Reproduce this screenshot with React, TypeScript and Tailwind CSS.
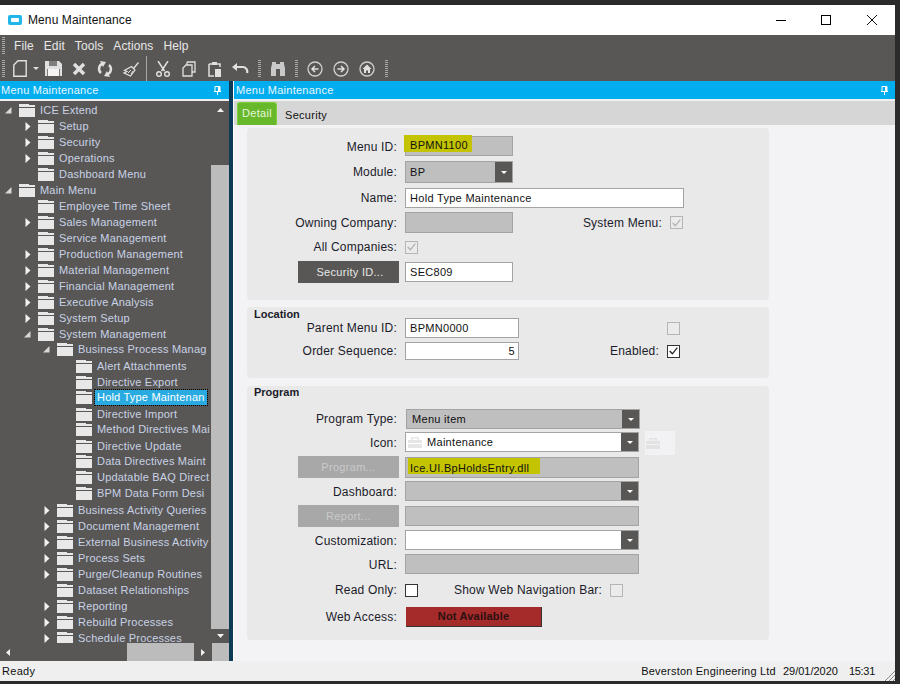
import type { ReactNode } from "react";

const grip = (
  <div className="w-[3px] h-[17px] shrink-0 bg-[repeating-linear-gradient(to_bottom,#a9a9a9_0,#a9a9a9_1px,transparent_1px,transparent_2px)]" />
);

function Folder() {
  return (
    <svg width="16" height="13" viewBox="0 0 16 13" className="shrink-0">
      <path d="M0 0h10v1h6v2H0z" fill="#e8e8e8" />
      <path d="M0 4h16v9H0z" fill="#e8e8e8" />
    </svg>
  );
}

function Arrow({ state }: { state?: "open" | "closed" }) {
  return (
    <span className="w-[7px] shrink-0 flex justify-end">
      {state === "open" && (
        <svg width="7" height="7" viewBox="0 0 7 7">
          <path d="M0 6.500 6.500 0v6.500z" fill="#d8d8d8" />
        </svg>
      )}
      {state === "closed" && (
        <svg width="6" height="9" viewBox="0 0 6 9">
          <path d="M.5 0 5.500 4.500.5 9z" fill="#f0f0f0" />
        </svg>
      )}
    </span>
  );
}

type TreeRow = {
  label: string;
  depth: number;
  state?: "open" | "closed";
  selected?: boolean;
  nudge?: string;
};

// the tree in the picture is not on an even 16px step in this stretch
const treeRows: TreeRow[] = [
  { label: "ICE Extend", depth: 0, state: "open" },
  { label: "Setup", depth: 1, state: "closed" },
  { label: "Security", depth: 1, state: "closed" },
  { label: "Operations", depth: 1, state: "closed" },
  { label: "Dashboard Menu", depth: 1 },
  { label: "Main Menu", depth: 0, state: "open" },
  { label: "Employee Time Sheet", depth: 1 },
  { label: "Sales Management", depth: 1, state: "closed" },
  { label: "Service Management", depth: 1 },
  { label: "Production Management", depth: 1, state: "closed" },
  { label: "Material Management", depth: 1, state: "closed" },
  { label: "Financial Management", depth: 1, state: "closed" },
  { label: "Executive Analysis", depth: 1, state: "closed" },
  { label: "System Setup", depth: 1, state: "closed" },
  { label: "System Management", depth: 1, state: "open" },
  { label: "Business Process Manag", depth: 2, state: "open", nudge: "mt-[-1px]" },
  { label: "Alert Attachments", depth: 3, nudge: "mt-px" },
  { label: "Directive Export", depth: 3 },
  { label: "Hold Type Maintenan", depth: 3, selected: true, nudge: "mt-[-1px]" },
  { label: "Directive Import", depth: 3, nudge: "mt-px" },
  { label: "Method Directives Mai", depth: 3, nudge: "mt-[-1px]" },
  { label: "Directive Update", depth: 3, nudge: "mt-px" },
  { label: "Data Directives Maint", depth: 3, nudge: "mt-[-1px]" },
  { label: "Updatable BAQ Direct", depth: 3 },
  { label: "BPM Data Form Desi", depth: 3 },
  { label: "Business Activity Queries", depth: 2, state: "closed", nudge: "mt-px" },
  { label: "Document Management", depth: 2, state: "closed" },
  { label: "External Business Activity", depth: 2, state: "closed" },
  { label: "Process Sets", depth: 2, state: "closed" },
  { label: "Purge/Cleanup Routines", depth: 2, state: "closed" },
  { label: "Dataset Relationships", depth: 2 },
  { label: "Reporting", depth: 2, state: "closed" },
  { label: "Rebuild Processes", depth: 2, state: "closed" },
  { label: "Schedule Processes", depth: 2, state: "closed" },
];

const depthPad = ["pl-[5px]", "pl-[24px]", "pl-[43px]", "pl-[62px]"];

function Toolbar() {
  const c = "#e0e0e0";
  return (
    <div className="h-[25px] flex items-center pl-[2px]">
      {grip}
      <svg width="14" height="17" viewBox="0 0 14 17" className="ml-[8px]">
        <path d="M5 .8h8.200v15.400H.8V5z" fill="none" stroke={c} strokeWidth="1.400" />
      </svg>
      <svg width="6" height="4" viewBox="0 0 6 4" className="ml-[6px]">
        <path d="M0 0h6L3 3z" fill={c} />
      </svg>
      <svg width="17" height="15" viewBox="0 0 17 15" className="ml-[6px]">
        <path d="M0 0h14l3 3v12H0z" fill={c} />
        <path d="M4 0h8v5H4z" fill="#807e7c" />
        <path d="M3 8h11v7H3z" fill="#f4f4f4" />
        <path d="M2 8h1v7H2zM14 8h1v7h-1z" fill="#807e7c" />
      </svg>
      <svg width="14" height="14" viewBox="0 0 14 14" className="ml-[10px]">
        <path d="M2 2l10 10M12 2 2 12" stroke={c} strokeWidth="3.400" />
      </svg>
      <svg width="16" height="16" viewBox="0 0 16 16" className="ml-[11px]">
        <path d="M6 2.500A5.500 5.500 0 0 0 4 12M10 13.500A5.500 5.500 0 0 0 12 4" fill="none" stroke={c} strokeWidth="2.400" />
        <path d="M3 0 9 1 6 6zM13 16 7 15l3-5z" fill={c} />
      </svg>
      <svg width="17" height="16" viewBox="0 0 17 16" className="ml-[10px]">
        <path d="M10 7 15 1l1 1-5 6" fill={c} />
        <path d="M8.500 5.500 12 9l-4.500 6L1 12l3-1.500-2.500-1z" fill="none" stroke={c} strokeWidth="1.200" />
        <path d="M5 12l3-3M8 13l2-3" stroke={c} strokeWidth="1" />
      </svg>
      <div className="w-px h-[25px] bg-[#a8a8a8] ml-[6px]" />
      <svg width="16" height="16" viewBox="0 0 16 16" className="ml-[8px]">
        <path d="M3 0l6.500 10M13 0 6.500 10" stroke={c} strokeWidth="1.500" />
        <circle cx="4" cy="13" r="2.300" fill="none" stroke={c} strokeWidth="1.400" />
        <circle cx="12" cy="13" r="2.300" fill="none" stroke={c} strokeWidth="1.400" />
      </svg>
      <svg width="14" height="16" viewBox="0 0 14 16" className="ml-[11px]">
        <path d="M5 1h8v10h-3M5 1v3" fill="none" stroke={c} strokeWidth="1.300" />
        <path d="M4 4h6v11H1V7z" fill="none" stroke={c} strokeWidth="1.300" />
      </svg>
      <svg width="14" height="16" viewBox="0 0 14 16" className="ml-[12px]">
        <path d="M1 3h11v3M1 3v12h5" fill="none" stroke={c} strokeWidth="1.500" />
        <path d="M4 1h5v3H4z" fill={c} />
        <path d="M7 8h6v8H7z" fill={c} />
      </svg>
      <svg width="17" height="11" viewBox="0 0 17 11" className="ml-[10px]">
        <path d="M4 4h6.500a4.500 4.500 0 0 1 4.500 6" fill="none" stroke={c} strokeWidth="2.200" />
        <path d="M0 4l5-4v8z" fill={c} />
      </svg>
      <div className="ml-[9px]">{grip}</div>
      <svg width="16" height="14" viewBox="0 0 16 14" className="ml-[9px]">
        <path d="M1 6 2 2V0h4v2h4V0h4v2l1 4v8h-5V7H6v7H1z" fill="#c9c9c9" />
      </svg>
      <div className="ml-[9px]">{grip}</div>
      {["M11.500 8H5M8 5 5 8l3 3", "M4.500 8H11M8 5l3 3-3 3", ""].map((d, i) => (
        <svg key={i} width="16" height="16" viewBox="0 0 16 16" className={i === 0 ? "ml-[9px]" : "ml-[10px]"}>
          <circle cx="8" cy="8" r="7" fill="none" stroke="#d0d0d0" strokeWidth="1.300" />
          {d ? (
            <path d={d} fill="none" stroke={c} strokeWidth="1.500" />
          ) : (
            <path d="M8 3.500 12.500 8H11v4H9V9.500H7V12H5V8H3.500z" fill={c} />
          )}
        </svg>
      ))}
      <div className="ml-[10px]">{grip}</div>
    </div>
  );
}

function Pin() {
  return (
    <svg width="7" height="9" viewBox="0 0 7 9">
      <path d="M1 .5h5v5H1zM0 5.500h7M3.500 5.500V9" fill="none" stroke="#fff" />
      <path d="M4 1h2v4H4z" fill="#fff" />
    </svg>
  );
}

function DropBtn() {
  return (
    <span className="ml-auto w-[17px] h-full bg-[#595755] flex items-center justify-center shrink-0">
      <svg width="6" height="3" viewBox="0 0 6 3">
        <path d="M0 0h6L3 3z" fill="#fff" />
      </svg>
    </span>
  );
}

function Field({
  w,
  white,
  drop,
  right,
  children,
  h = "h-[20px]",
}: {
  w: string;
  white?: boolean;
  drop?: boolean;
  right?: boolean;
  children?: ReactNode;
  h?: string;
}) {
  return (
    <div
      className={`${w} ${h} border border-[#a3a3a3] shrink-0 flex items-center text-[11px] tracking-[0.3px] text-[#111] ${
        white ? "bg-white" : "bg-[#bfbfbf]"
      } ${right ? "justify-end pr-[3px]" : ""}`}
    >
      {children}
      {drop && <DropBtn />}
    </div>
  );
}

function Label({ children, w = "w-[158px]", low }: { children: ReactNode; w?: string; low?: boolean }) {
  return (
    <span className={`${w} ${low ? "pt-px" : ""} shrink-0 text-right text-[12px] tracking-[0.2px] text-[#1b1b2a] pr-[8px]`}>
      {children}
    </span>
  );
}

function Check({ checked, disabled }: { checked?: boolean; disabled?: boolean }) {
  return (
    <span
      className={`w-[13px] h-[13px] shrink-0 border flex items-center justify-center ${
        disabled ? "border-[#b5b5b5] bg-[#ebebeb]" : "border-[#333] bg-white"
      }`}
    >
      {checked && (
        <svg width="9" height="8" viewBox="0 0 9 8">
          <path d="M.7 4 3.400 6.800 8.300.7" fill="none" stroke={disabled ? "#b0b0b0" : "#222"} strokeWidth="1.300" />
        </svg>
      )}
    </span>
  );
}

function Btn({ children, dark }: { children: ReactNode; dark?: boolean }) {
  return (
    <div className="pl-[51px] pr-[6px] shrink-0">
      <div
        className={`w-[101px] h-[22px] flex items-center justify-center text-[11px] tracking-[0.3px] ${
          dark ? "bg-[#595755] text-[#e8e8e8] pl-[3px]" : "bg-[#a8a8a8] text-[#c9c9c9]"
        }`}
      >
        {children}
      </div>
    </div>
  );
}

function Toolbox({ color }: { color: string }) {
  return (
    <svg width="14" height="11" viewBox="0 0 14 11" className="shrink-0">
      <path d="M3 3V0h8v3h3v3H0V3zM4.500 3h5V1.500h-5z" fill={color} fillRule="evenodd" />
      <path d="M0 7h14v4H0z" fill={color} />
    </svg>
  );
}

export default function App() {
  return (
    <div className="w-[900px] h-[684px] bg-[#2b2b2b] pt-[5px] pr-[5px] pb-[3px] overflow-hidden font-['Liberation_Sans',Arial,sans-serif] flex flex-col">
      {/* Title bar */}
      <div className="h-[30px] bg-white flex items-center shrink-0">
        <span className="ml-[8px] w-[14px] h-[10px] rounded-[2px] bg-[#22b5e8] flex items-center justify-center">
          <span className="w-[8px] h-[4px] bg-white rounded-[1px]" />
        </span>
        <span className="ml-[6px] text-[12px] tracking-[0.1px] text-[#111]">Menu Maintenance</span>
        <div className="ml-auto flex items-center">
          <span className="w-[10px] h-px bg-black mr-[35px]" />
          <span className="w-[10px] h-[10px] border border-black mr-[36px]" />
          <svg width="10" height="10" viewBox="0 0 10 10" className="mr-[18px]">
            <path d="M0 0l10 10M10 0 0 10" stroke="#111" strokeWidth="1" />
          </svg>
        </div>
      </div>

      {/* Menu and tool bars */}
      <div className="bg-[#595755] shrink-0 h-[46px]">
        <div className="h-[21px] flex items-center pl-[2px]">
          {grip}
          <div className="ml-[9px] flex gap-[10px] text-[12px] tracking-[0.1px] text-[#e8e8e8]">
            {["File", "Edit", "Tools", "Actions", "Help"].map((m) => (
              <span key={m}>{m}</span>
            ))}
          </div>
        </div>
        <Toolbar />
      </div>

      <div className="flex-1 flex min-h-0">
        {/* Tree panel */}
        <div className="w-[229px] shrink-0 flex flex-col bg-[#595755]">
          <div className="h-[18px] bg-[#00aeef] flex items-center justify-between pl-px pr-[8px] text-[11px] tracking-[0.25px] text-[#e9f6ff] shrink-0">
            Menu Maintenance
            <Pin />
          </div>
          <div className="h-[2px] bg-[#f0f0f0] shrink-0" />
          <div className="flex-1 min-h-0 flex flex-col">
            <div className="flex-1 min-h-0 flex">
              <div className="flex-1 min-w-0 pt-px overflow-hidden">
                {treeRows.map((r) => (
                  <div key={r.label} className={`h-[16px] flex items-center ${depthPad[r.depth]} ${r.nudge ?? ""}`}>
                    <Arrow state={r.state} />
                    <span className="ml-[7px]">
                      <Folder />
                    </span>
                    <span
                      className={`ml-[3px] px-[2px] h-[15px] leading-[15px] text-[11px] tracking-[0.2px] whitespace-nowrap ${
                        r.selected ? "bg-[#29abe2] text-white outline-1 outline-dotted outline-black" : "text-[#c8d2e6]"
                      }`}
                    >
                      {r.label}
                    </span>
                  </div>
                ))}
              </div>
              <div className="w-[18px] shrink-0 flex flex-col items-center">
                <svg width="7" height="4" viewBox="0 0 7 4" className="mt-[7px]">
                  <path d="M0 4h7L3.500 0z" fill="#f0f0f0" />
                </svg>
                <div className="mt-[53px] flex-1 w-full bg-[#bcbcbc]" />
                <svg width="7" height="4" viewBox="0 0 7 4" className="my-[5px]">
                  <path d="M0 0h7L3.500 4z" fill="#f0f0f0" />
                </svg>
              </div>
            </div>
            <div className="h-[18px] flex items-center shrink-0">
              <svg width="4" height="7" viewBox="0 0 4 7" className="ml-[6px]">
                <path d="M4 0v7L0 3.500z" fill="#f0f0f0" />
              </svg>
              <div className="ml-[117px] w-[67px] h-full bg-[#bcbcbc]" />
              <svg width="4" height="7" viewBox="0 0 4 7" className="ml-[7px]">
                <path d="M0 0v7l4-3.500z" fill="#f0f0f0" />
              </svg>
              <div className="ml-[7px] w-[17px] h-full bg-[#bcbcbc]" />
            </div>
          </div>
        </div>

        <div className="w-[4px] shrink-0 bg-[#0c3a57]" />
        <div className="w-px shrink-0 bg-white" />

        {/* Detail panel */}
        <div className="flex-1 min-w-0 flex flex-col bg-[#f3f3f5]">
          <div className="h-[18px] bg-[#00aeef] flex items-center justify-between pl-[2px] pr-[7px] text-[11px] tracking-[0.25px] text-[#e9f6ff] shrink-0">
            Menu Maintenance
            <Pin />
          </div>
          <div className="h-[2px] bg-[#f0f0f0] shrink-0" />
          <div className="h-[24px] bg-[#d6d6d6] flex items-end pl-[3px] shrink-0">
            <div className="h-[23px] w-[40px] rounded-t-[3px] border border-b-0 border-[#7fd13b] bg-[#68b82c] text-[11px] tracking-[0.3px] text-[#e6f5dc] text-center pt-[2px]">
              Detail
            </div>
            <div className="ml-[8px] h-[23px] text-[11px] tracking-[0.3px] text-[#111] pt-[5px]">Security</div>
          </div>

          <div className="pl-[13px] pt-[3px] flex flex-col">
            {/* General group */}
            <div className="w-[522px] h-[172px] bg-[#e9e9e9] rounded-[4px] pt-[8px] flex flex-col">
              <div className="flex items-center h-[20px]">
                <Label low>Menu ID:</Label>
                <Field w="w-[108px]">
                  <span className="w-[68px] h-[17px] ml-[-2px] mt-[-2px] pl-[6px] pt-[5px] leading-none bg-[#c3c300] self-start">
                    BPMN1100
                  </span>
                </Field>
              </div>
              <div className="flex items-center h-[22px] mt-[5px]">
                <Label>Module:</Label>
                <Field w="w-[108px]" h="h-[22px]" drop>
                  <span className="pl-[4px]">BP</span>
                </Field>
              </div>
              <div className="flex items-center h-[20px] mt-[5px]">
                <Label>Name:</Label>
                <Field w="w-[279px]" white>
                  <span className="pl-[4px]">Hold Type Maintenance</span>
                </Field>
              </div>
              <div className="flex items-center h-[21px] mt-[4px]">
                <Label>Owning Company:</Label>
                <Field w="w-[108px]" h="h-[21px]" />
                <Label w="w-[157px]">System Menu:</Label>
                <Check checked disabled />
              </div>
              <div className="flex items-center h-[14px] mt-[7px]">
                <Label>All Companies:</Label>
                <Check checked disabled />
              </div>
              <div className="flex items-center h-[22px] mt-[7px]">
                <Btn dark>Security ID...</Btn>
                <Field w="w-[108px]" white>
                  <span className="pl-[4px]">SEC809</span>
                </Field>
              </div>
            </div>

            {/* Location group */}
            <div className="w-[522px] h-[71px] mt-[7px] bg-[#e9e9e9] rounded-[4px] relative pt-[11px] flex flex-col">
              <span className="absolute left-[7px] top-[2px] leading-none text-[11px] font-bold text-[#1b1b2a]">Location</span>
              <div className="flex items-center h-[20px]">
                <Label>Parent Menu ID:</Label>
                <Field w="w-[114px]" white>
                  <span className="pl-[4px]">BPMN0000</span>
                </Field>
                <span className="ml-[148px]">
                  <Check disabled />
                </span>
              </div>
              <div className="flex items-center h-[18px] mt-[4px]">
                <Label>Order Sequence:</Label>
                <Field w="w-[114px]" h="h-[18px]" white right>
                  5
                </Field>
                <Label w="w-[148px]">Enabled:</Label>
                <Check checked />
              </div>
            </div>

            {/* Program group */}
            <div className="w-[522px] h-[254px] mt-[8px] bg-[#e9e9e9] rounded-[4px] relative pt-[23px] flex flex-col">
              <span className="absolute left-[7px] top-px leading-none text-[11px] font-bold text-[#1b1b2a]">Program</span>
              <div className="flex items-center h-[20px]">
                <Label>Program Type:</Label>
                <span className="ml-px">
                  <Field w="w-[234px]" drop>
                    <span className="pl-[5px]">Menu item</span>
                  </Field>
                </span>
              </div>
              <div className="flex items-center h-[20px] mt-[3px]">
                <Label low>Icon:</Label>
                <Field w="w-[234px]" white drop>
                  <span className="ml-[2px]">
                    <Toolbox color="#e6e6e6" />
                  </span>
                  <span className="pl-[5px]">Maintenance</span>
                </Field>
                <span className="ml-[6px] mt-[2px] w-[30px] h-[24px] bg-[#f2f2f4] flex items-center pl-px shrink-0">
                  <Toolbox color="#e3e3e3" />
                </span>
              </div>
              <div className="flex items-center h-[22px] mt-[4px]">
                <Btn>Program...</Btn>
                <Field w="w-[234px]" h="h-[21px]">
                  <span className="w-[132px] h-[16px] ml-[2px] pl-[2px] flex items-end leading-none bg-[#c3c300] self-start">
                    Ice.UI.BpHoldsEntry.dll
                  </span>
                </Field>
              </div>
              <div className="flex items-center h-[20px] mt-[3px]">
                <Label low>Dashboard:</Label>
                <Field w="w-[234px]" drop />
              </div>
              <div className="flex items-center h-[22px] mt-[4px]">
                <Btn>Report...</Btn>
                <Field w="w-[234px]" />
              </div>
              <div className="flex items-center h-[20px] mt-[3px]">
                <Label low>Customization:</Label>
                <Field w="w-[234px]" white drop />
              </div>
              <div className="flex items-center h-[20px] mt-[4px]">
                <Label low>URL:</Label>
                <Field w="w-[234px]" />
              </div>
              <div className="flex items-center h-[14px] mt-[9px]">
                <Label>Read Only:</Label>
                <Check />
                <Label w="w-[192px]">Show Web Navigation Bar:</Label>
                <Check disabled />
              </div>
              <div className="flex items-center h-[20px] mt-[10px]">
                <Label>Web Access:</Label>
                <div className="ml-px w-[136px] h-[20px] bg-[#a52a2a] border-r border-b border-[#333] text-[11px] tracking-[0.2px] font-bold text-[#2a1010] flex items-center justify-center">
                  Not Available
                </div>
              </div>
            </div>
          </div>

          <div className="flex-1" />
        </div>
      </div>

      {/* Status bar */}
      <div className="h-[20px] bg-[#efefef] shrink-0 flex items-center text-[11px] text-[#111] pl-[2px]">
        <span className="tracking-[0.3px]">Ready</span>
        <span className="ml-auto tracking-[0.2px]">Beverston Engineering Ltd</span>
        <span className="ml-[7px]">29/01/2020</span>
        <span className="ml-[11px] tracking-[-0.3px]">15:31</span>
        <svg width="11" height="11" viewBox="0 0 11 11" className="ml-[9px] self-end">
          <path d="M11 1 1 11M11 5 5 11M11 9 9 11" stroke="#8a8a8a" strokeWidth="1" />
        </svg>
      </div>
    </div>
  );
}
